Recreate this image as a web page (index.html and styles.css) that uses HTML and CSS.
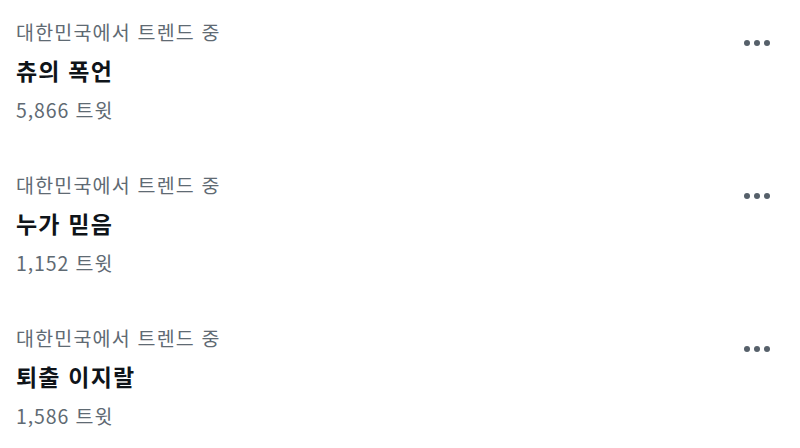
FILE: index.html
```html
<!DOCTYPE html>
<html lang="ko">
<head>
  <meta charset="UTF-8">
  <meta name="viewport" content="width=device-width, initial-scale=1.0">
  <title>트렌드</title>
  <link rel="stylesheet" href="styles.css">
</head>
<body>
  <div class="trends">
    <div class="trend">
      <div class="info">
        <div class="context">대한민국에서 트렌드 중</div>
        <div class="name">츄의 폭언</div>
        <div class="count">5,866 트윗</div>
      </div>
      <div class="more"><span></span><span></span><span></span></div>
    </div>

    <div class="trend">
      <div class="info">
        <div class="context">대한민국에서 트렌드 중</div>
        <div class="name">누가 믿음</div>
        <div class="count">1,152 트윗</div>
      </div>
      <div class="more"><span></span><span></span><span></span></div>
    </div>

    <div class="trend">
      <div class="info">
        <div class="context">대한민국에서 트렌드 중</div>
        <div class="name">퇴출 이지랄</div>
        <div class="count">1,586 트윗</div>
      </div>
      <div class="more"><span></span><span></span><span></span></div>
    </div>
  </div>
</body>
</html>
```

FILE: styles.css
```css
body {
  margin: 0;
  background: #fff;
  font-family: "Noto Sans CJK KR", "Noto Sans", sans-serif;
}
.trends {
  width: 800px;
}
.trend {
  display: flex;
  align-items: flex-start;
  height: 153px;
  box-sizing: border-box;
  padding: 19px 16px 0;
}
.info {
  flex: 1;
  display: flex;
  flex-direction: column;
  gap: 10px;
}
.context {
  color: #5f6a73;
  font-size: 19.5px;
  line-height: 26px;
  letter-spacing: 1.2px;
}
.name {
  color: #0f1419;
  font-size: 23px;
  font-weight: bold;
  line-height: 30px;
  letter-spacing: 1.2px;
}
.count {
  margin-top: 2px;
  color: #5f6a73;
  font-size: 19.5px;
  line-height: 26px;
  letter-spacing: 0.9px;
}
.more {
  display: flex;
  gap: 4px;
  margin-top: 21px;
  margin-right: 14px;
}
.more span {
  width: 6px;
  height: 6px;
  border-radius: 50%;
  background: #56606a;
}
```
